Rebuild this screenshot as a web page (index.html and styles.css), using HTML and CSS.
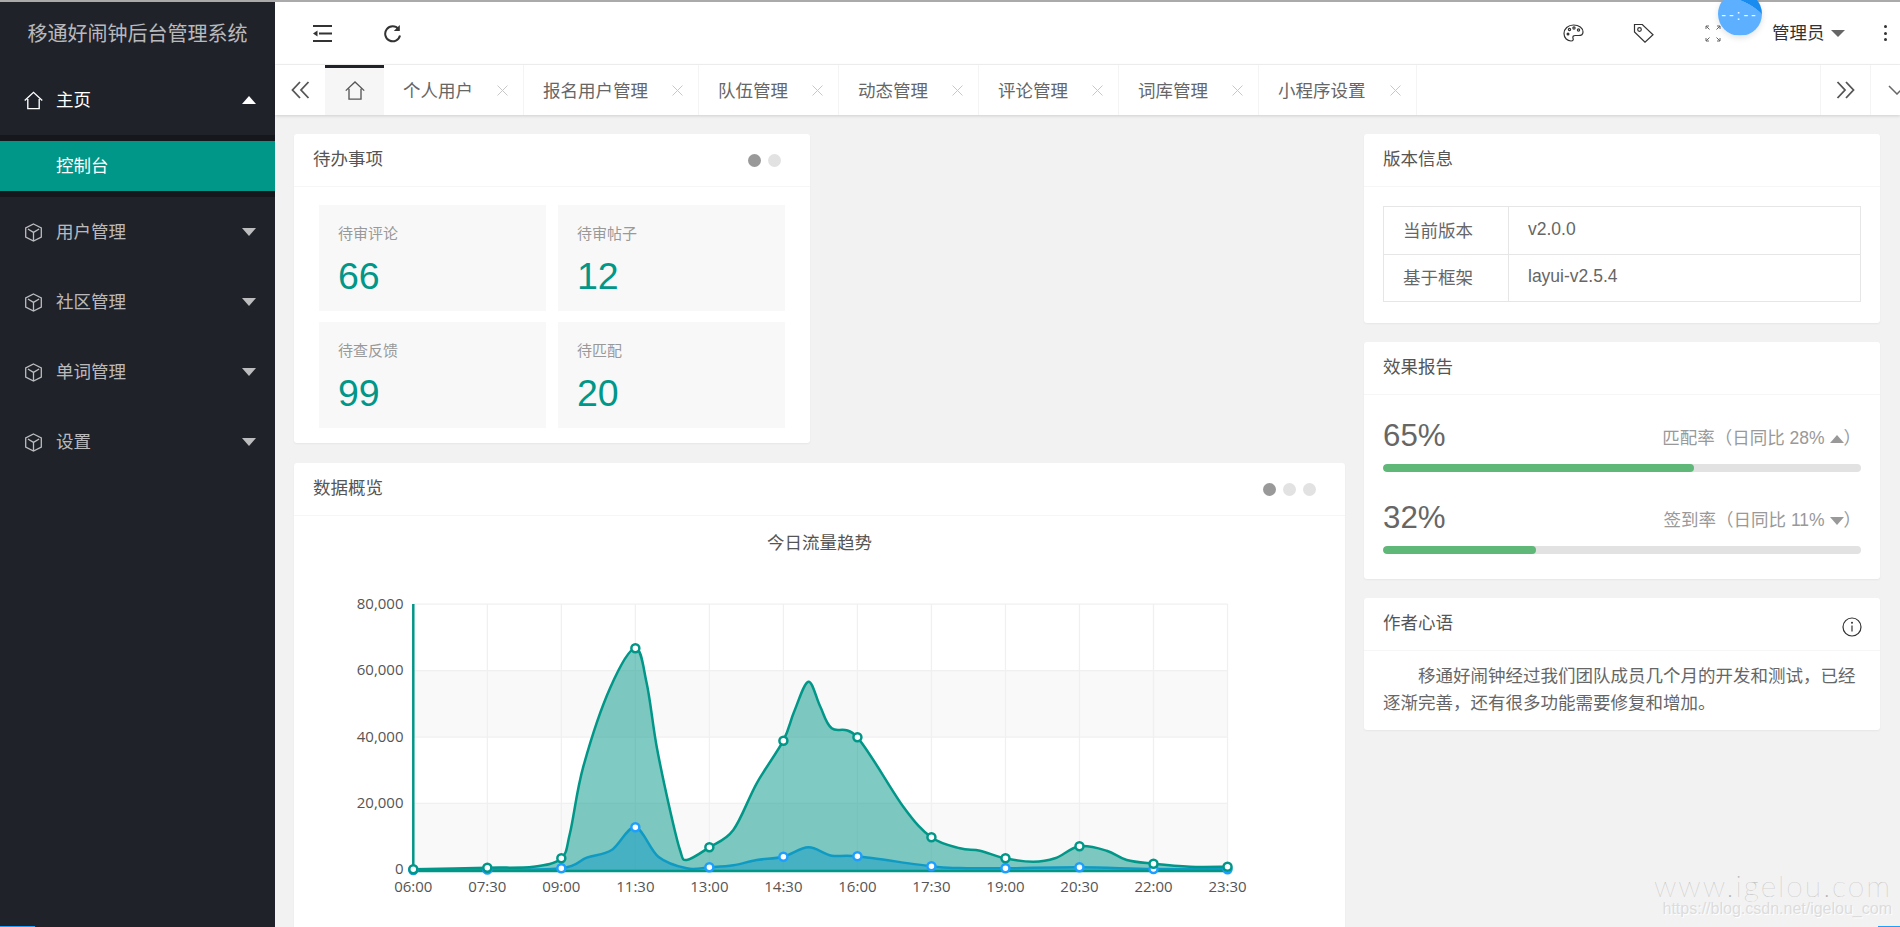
FILE: index.html
```html
<!DOCTYPE html>
<html lang="zh-CN">
<head>
  <meta charset="UTF-8">
  <meta name="viewport" content="width=device-width, initial-scale=1.0">
  <title>移通好闹钟后台管理系统</title>
  <link rel="stylesheet" href="styles.css">
</head>
<body>
  <svg class="icon-defs" aria-hidden="true">
    <symbol id="i-home" viewBox="0 0 18 17"><path d="M.7 8.6 9 .8l8.3 7.8M3.6 7v9.2h10.8V7"/></symbol>
    <symbol id="i-cube" viewBox="0 0 18 19"><path d="M9 1 16.8 5v9L9 18 1.2 14V5zM3.4 6 9 9.4 14.6 6M9 9.4v8"/></symbol>
    <symbol id="i-left" viewBox="0 0 19 18"><path d="M9 1 1.5 9 9 17M17.5 1 10 9l7.5 8"/></symbol>
    <symbol id="i-right" viewBox="0 0 19 18"><path d="M10 1l7.5 8-7.5 8M1.5 1 9 9l-7.5 8"/></symbol>
    <symbol id="i-close" viewBox="0 0 11 11"><path d="M.5.5l10 10M10.500.5l-10 10"/></symbol>
  </svg>

  <div class="top-line"></div>
  <div class="app">
    <aside class="sidebar">
      <div class="logo">移通好闹钟后台管理系统</div>
      <nav>
        <div class="nav-item open">
          <svg class="nav-icon"><use href="#i-home"/></svg>
          <span>主页</span>
          <i class="arrow-up"></i>
        </div>
        <div class="sub-nav">
          <div class="sub-item">控制台</div>
        </div>
        <div class="nav-item">
          <svg class="nav-icon"><use href="#i-cube"/></svg>
          <span>用户管理</span>
          <i class="arrow-down"></i>
        </div>
        <div class="nav-item">
          <svg class="nav-icon"><use href="#i-cube"/></svg>
          <span>社区管理</span>
          <i class="arrow-down"></i>
        </div>
        <div class="nav-item">
          <svg class="nav-icon"><use href="#i-cube"/></svg>
          <span>单词管理</span>
          <i class="arrow-down"></i>
        </div>
        <div class="nav-item">
          <svg class="nav-icon"><use href="#i-cube"/></svg>
          <span>设置</span>
          <i class="arrow-down"></i>
        </div>
      </nav>
    </aside>

    <div class="body">
      <header class="header">
        <div class="tool">
          <svg class="tool-icon" width="19" height="17" viewBox="0 0 19 17"><path d="M0 1h19M6 8.500h13M0 16h19"/><path class="solid" d="M0 8.500 4.500 5.500v6z"/></svg>
        </div>
        <div class="tool">
          <svg class="tool-icon" width="19" height="19" viewBox="0 0 19 19"><path d="M15.500 5A7.500 7.500 0 1 0 17 11.500"/><path class="solid" d="M16.800 1v6h-6z"/></svg>
        </div>
        <div class="header-right">
          <div class="tool">
            <svg class="tool-icon thin" width="21" height="18" viewBox="0 0 21 18"><path d="M10.500 1C5 1 1 4.800 1 9.500S4.500 17 8 17c2.500 0 2.500-1.500 2-2.800-.6-1.600.4-2.700 2.200-2.700h3.300c2.700 0 4.500-1.400 4.500-3.600C20 4 16 1 10.500 1z"/><circle class="solid" cx="5" cy="10" r="1.500"/><circle cx="6.500" cy="5.500" r="1.100"/><circle cx="11" cy="4" r="1.100"/><circle cx="15.500" cy="6" r="1.100"/></svg>
          </div>
          <div class="tool">
            <svg class="tool-icon thin" width="21" height="20" viewBox="0 0 21 20"><path d="M1.500 1.500h7.800L20 11.800 12 19.200 1.500 8.900z"/><circle cx="6.500" cy="6.500" r="1.800"/></svg>
          </div>
          <div class="tool">
            <svg class="tool-icon hair" width="16" height="17" viewBox="0 0 16 17"><path d="M4 1H1v3M1 1l3.500 3.500M12 1h3v3M15 1l-3.500 3.500M4 16H1v-3M1 16l3.500-3.500M12 16h3v-3M15 16l-3.500-3.500"/></svg>
          </div>
          <div class="admin"><span>管理员</span><i class="arrow-admin"></i></div>
          <div class="more"><i></i><i></i><i></i></div>
        </div>
        <div class="clock-ball">--:--</div>
      </header>

      <div class="tabs">
        <div class="tab-btn">
          <svg class="tab-arrow"><use href="#i-left"/></svg>
        </div>
        <div class="tab tab-home">
          <svg class="tab-home-icon"><use href="#i-home"/></svg>
        </div>
        <div class="tab"><span>个人用户</span><svg class="tab-close"><use href="#i-close"/></svg></div>
        <div class="tab"><span>报名用户管理</span><svg class="tab-close"><use href="#i-close"/></svg></div>
        <div class="tab"><span>队伍管理</span><svg class="tab-close"><use href="#i-close"/></svg></div>
        <div class="tab"><span>动态管理</span><svg class="tab-close"><use href="#i-close"/></svg></div>
        <div class="tab"><span>评论管理</span><svg class="tab-close"><use href="#i-close"/></svg></div>
        <div class="tab"><span>词库管理</span><svg class="tab-close"><use href="#i-close"/></svg></div>
        <div class="tab"><span>小程序设置</span><svg class="tab-close"><use href="#i-close"/></svg></div>
        <div class="tab-tools">
          <div class="tab-btn tab-btn-right">
            <svg class="tab-arrow"><use href="#i-right"/></svg>
          </div>
          <div class="tab-btn tab-btn-last">
            <svg class="tab-down" width="18" height="10" viewBox="0 0 18 10"><path d="M1 1l8 8 8-8"/></svg>
          </div>
        </div>
      </div>

      <main class="content">
        <div class="col-left">
          <section class="card card-todo">
            <div class="card-head">
              待办事项
              <div class="dots"><i class="on"></i><i></i></div>
            </div>
            <div class="todo-grid">
              <div class="tile"><p>待审评论</p><cite>66</cite></div>
              <div class="tile"><p>待审帖子</p><cite>12</cite></div>
              <div class="tile"><p>待查反馈</p><cite>99</cite></div>
              <div class="tile"><p>待匹配</p><cite>20</cite></div>
            </div>
          </section>

          <section class="card">
            <div class="card-head">
              数据概览
              <div class="dots"><i class="on"></i><i></i><i></i></div>
            </div>
            <svg id="chart" class="chart" viewBox="294 516 1051 420"></svg>
          </section>
        </div>

        <div class="col-right">
          <section class="card">
            <div class="card-head">版本信息</div>
            <div class="version-body">
              <table class="version-table">
                <tr><td class="version-key">当前版本</td><td>v2.0.0</td></tr>
                <tr><td class="version-key">基于框架</td><td>layui-v2.5.4</td></tr>
              </table>
            </div>
          </section>

          <section class="card">
            <div class="card-head">效果报告</div>
            <div class="report-body">
              <div class="report-row">
                <span class="report-num">65%</span>
                <span class="report-note">匹配率（日同比 28% <i class="tri-up"></i>）</span>
              </div>
              <div class="progress"><div class="progress-bar" style="width: 65%"></div></div>
              <div class="report-row report-second">
                <span class="report-num">32%</span>
                <span class="report-note">签到率（日同比 11% <i class="tri-down"></i>）</span>
              </div>
              <div class="progress"><div class="progress-bar" style="width: 32%"></div></div>
            </div>
          </section>

          <section class="card">
            <div class="card-head">
              作者心语
              <svg class="info-icon" width="20" height="20" viewBox="0 0 20 20"><circle cx="10" cy="10" r="9"/><path d="M10 8.500v6"/><circle class="solid" cx="10" cy="5.800" r="1"/></svg>
            </div>
            <p class="author-text">移通好闹钟经过我们团队成员几个月的开发和测试，已经逐渐完善，还有很多功能需要修复和增加。</p>
          </section>
        </div>
      </main>
    </div>
  </div>

  <div class="watermark">
    <div class="watermark-site">www.igelou.com</div>
    <div class="watermark-url">https://blog.csdn.net/igelou_com</div>
  </div>
  <div class="edge-left"></div>
  <div class="edge-right"></div>

  <script src="chart.js"></script>
</body>
</html>
```

FILE: styles.css
```css
* {
  box-sizing: border-box;
}
html, body {
  height: 100%;
}
body {
  margin: 0;
  overflow: hidden;
  background: #f2f2f2;
  color: #666;
  font-family: "Liberation Sans", "Noto Sans CJK SC", sans-serif;
  font-size: 17.5px;
}
p {
  margin: 0;
}
i, cite {
  font-style: normal;
}
.icon-defs {
  position: absolute;
  width: 0;
  height: 0;
}
.top-line {
  height: 2px;
  background: #aaa;
}
.app {
  display: flex;
  height: 925px;
}

/* sidebar */
.sidebar {
  flex: none;
  width: 275px;
  background: #20222a;
  color: rgba(255, 255, 255, 0.7);
}
.logo {
  height: 63px;
  line-height: 64px;
  text-align: center;
  font-size: 20px;
}
.nav-item {
  display: flex;
  align-items: center;
  height: 70px;
  padding: 0 19px 0 24px;
}
.nav-item span {
  padding-bottom: 4px;
}
.nav-item.open {
  color: #fff;
}
.nav-icon {
  flex: none;
  width: 19px;
  height: 19px;
  margin-right: 13px;
  fill: none;
  stroke: currentColor;
  stroke-width: 1.3;
}
.arrow-up, .arrow-down {
  margin-left: auto;
  border-left: 7.5px solid transparent;
  border-right: 7.5px solid transparent;
}
.arrow-up {
  border-bottom: 8px solid #fff;
}
.arrow-down {
  border-top: 8px solid rgba(255, 255, 255, 0.7);
}
.sub-nav {
  padding: 6px 0;
  background: #15171c;
}
.sub-item {
  height: 50px;
  line-height: 50px;
  padding-left: 56px;
  background: #009688;
  color: #fff;
}

/* header */
.body {
  flex: 1;
  min-width: 0;
}
.header {
  position: relative;
  display: flex;
  align-items: center;
  height: 63px;
  padding-left: 12px;
  background: #fff;
  border-bottom: 1px solid #f2f2f2;
}
.tool {
  display: flex;
  align-items: center;
  justify-content: center;
  width: 70px;
}
.tool-icon {
  fill: none;
  stroke: #333;
  stroke-width: 2;
}
.tool-icon.thin {
  stroke-width: 1.2;
}
.tool-icon.hair {
  stroke: #666;
  stroke-width: 1;
}
.tool-icon .solid {
  fill: #333;
  stroke: none;
}
.header-right {
  display: flex;
  align-items: center;
  margin-left: auto;
}
.admin {
  display: flex;
  align-items: center;
  width: 122px;
  padding-left: 24px;
  color: #333;
}
.admin span {
  padding-bottom: 4px;
}
.arrow-admin {
  margin-left: 6px;
  border-left: 7px solid transparent;
  border-right: 7px solid transparent;
  border-top: 7px solid #666;
}
.more {
  display: flex;
  flex-direction: column;
  align-items: center;
  gap: 3.5px;
  width: 30px;
}
.more i {
  width: 3px;
  height: 3px;
  background: #333;
  border-radius: 50%;
}
.clock-ball {
  position: absolute;
  top: -10px;
  right: 138px;
  width: 44px;
  height: 44px;
  line-height: 46px;
  text-align: center;
  white-space: nowrap;
  border-radius: 50%;
  color: #fff;
  font-size: 14px;
  letter-spacing: 3px;
  background:
    linear-gradient(transparent 43px, #bfe6e6 43px),
    radial-gradient(circle at 1px 65.5px, #5cb0ff 61px, #1a8cf0 61.5px);
  box-shadow: 0 2px 6px rgba(0, 0, 0, 0.12);
}

/* tabs */
.tabs {
  display: flex;
  height: 50px;
  background: #fff;
  box-shadow: 0 1px 3px rgba(0, 0, 0, 0.15);
  position: relative;
}
.tab-btn {
  flex: none;
  display: flex;
  align-items: center;
  justify-content: center;
  width: 50px;
}
.tab-arrow {
  width: 19px;
  height: 18px;
  fill: none;
  stroke: #555;
  stroke-width: 1.8;
}
.tab {
  flex: none;
  display: flex;
  align-items: center;
  padding: 0 15px 0 19px;
  color: #666;
  border-right: 1px solid #f4f4f4;
}
.tab span {
  padding-bottom: 2px;
}
.tab-close {
  width: 11px;
  height: 11px;
  margin-left: 24px;
  fill: none;
  stroke: #c8c8c8;
  stroke-width: 1;
}
.tab-home {
  width: 59px;
  padding: 0;
  justify-content: center;
  background: #f6f6f6;
  border-top: 3px solid #20222a;
  border-right: 0;
}
.tab-home-icon {
  width: 20px;
  height: 19px;
  margin-top: -3px;
  fill: none;
  stroke: #555;
  stroke-width: 1.2;
}
.tab-tools {
  display: flex;
  margin-left: auto;
}
.tab-btn-right {
  border-left: 1px solid #f4f4f4;
}
.tab-btn-last {
  width: 30px;
  justify-content: flex-start;
  padding-left: 17px;
  overflow: hidden;
  border-left: 1px solid #f4f4f4;
}
.tab-down {
  flex: none;
  fill: none;
  stroke: #666;
  stroke-width: 1.5;
}

/* content */
.content {
  display: flex;
  gap: 19px;
  height: 812px;
  padding: 19px 20px 0 19px;
  overflow: hidden;
}
.col-left {
  flex: none;
  display: flex;
  flex-direction: column;
  gap: 20px;
  width: 1051px;
}
.col-right {
  flex: none;
  display: flex;
  flex-direction: column;
  gap: 19px;
  width: 516px;
}
.card {
  flex: none;
  background: #fff;
  border-radius: 3px;
  box-shadow: 0 1px 2px rgba(0, 0, 0, 0.05);
}
.card-todo {
  width: 516px;
}
.card-head {
  display: flex;
  align-items: center;
  justify-content: space-between;
  height: 53px;
  padding: 0 19px 5px;
  border-bottom: 1px solid #f6f6f6;
  color: #555;
}
.dots {
  display: flex;
  gap: 7px;
  margin: 5px 10px 0 0;
}
.dots i {
  width: 13px;
  height: 13px;
  border-radius: 50%;
  background: #e2e2e2;
}
.dots i.on {
  background: #999;
}
.todo-grid {
  display: grid;
  grid-template-columns: 227px 227px;
  gap: 11px 12px;
  padding: 18px 25px 15px;
}
.tile {
  height: 106px;
  padding: 20px 19px 0;
  background: #f8f8f8;
}
.tile p {
  line-height: 18px;
  font-size: 15px;
  color: #999;
}
.tile cite {
  display: block;
  margin-top: 11px;
  line-height: 44px;
  font-size: 37.5px;
  color: #009688;
}
.chart {
  display: block;
  width: 1051px;
  height: 420px;
}
.chart text {
  font-family: "Open Sans", "Noto Sans CJK SC", sans-serif;
  font-size: 15px;
  fill: #555;
}
.chart .chart-title {
  font-family: "Liberation Sans", "Noto Sans CJK SC", sans-serif;
  font-size: 17.5px;
  fill: #555;
}
.chart .band {
  fill: #f9f9f9;
}
.chart .grid {
  stroke: #f0f0f0;
  stroke-width: 1.25;
}
.chart .axis {
  stroke: #009688;
  stroke-width: 2.5;
}
.chart .area-teal {
  fill: rgba(0, 150, 136, 0.5);
}
.chart .line-teal {
  fill: none;
  stroke: #009688;
  stroke-width: 2.5;
}
.chart .area-blue {
  fill: rgba(30, 159, 255, 0.5);
}
.chart .line-blue {
  fill: none;
  stroke: #1e9fff;
  stroke-width: 2.5;
}
.chart .dot-teal {
  fill: #fff;
  stroke: #009688;
  stroke-width: 2.5;
}
.chart .dot-blue {
  fill: #fff;
  stroke: #1e9fff;
  stroke-width: 2.5;
}
.version-body {
  padding: 19px 19px 21px;
}
.version-table {
  width: 100%;
  border-collapse: collapse;
}
.version-table td {
  height: 47.5px;
  padding: 0 19px 2px;
  border: 1.25px solid #e6e6e6;
}
.version-key {
  width: 125px;
}
.report-body {
  padding: 22px 19px 25px;
}
.report-row {
  display: flex;
  align-items: center;
  justify-content: space-between;
  height: 38px;
  margin-bottom: 9px;
}
.report-second {
  margin-top: 27px;
}
.report-num {
  font-size: 31.25px;
}
.report-note {
  color: #999;
}
.tri-up, .tri-down {
  display: inline-block;
  vertical-align: middle;
  border-left: 7.5px solid transparent;
  border-right: 7.5px solid transparent;
}
.tri-up {
  border-bottom: 8px solid #999;
}
.tri-down {
  border-top: 8px solid #999;
}
.progress {
  height: 8px;
  background: #e2e2e2;
  border-radius: 8px;
  overflow: hidden;
}
.progress-bar {
  height: 100%;
  background: #5fb878;
  border-radius: 8px;
}
.info-icon {
  margin: 11px -1px 0 0;
  fill: none;
  stroke: #333;
  stroke-width: 1.2;
}
.info-icon .solid {
  fill: #333;
  stroke: none;
}
.author-text {
  padding: 12px 19px 13px;
  line-height: 27px;
  text-indent: 35px;
}

/* overlays at the window edge */
.watermark {
  position: absolute;
  right: 8px;
  bottom: 8px;
  text-align: right;
  pointer-events: none;
}
.watermark-site {
  margin-bottom: -3px;
  font-family: "Lato", sans-serif;
  font-weight: 100;
  font-size: 30px;
  line-height: 34px;
  letter-spacing: 2px;
  color: #b5b5b5;
}
.watermark-url {
  line-height: 20px;
  font-size: 16px;
  color: #dcdcdc;
  text-shadow: 1px 1px 1px #fff;
}
.edge-left, .edge-right {
  position: absolute;
  bottom: 0;
  height: 1px;
  background: #1e9fff;
}
.edge-left {
  left: 0;
  width: 35px;
}
.edge-right {
  right: 0;
  width: 22px;
}
```

FILE: chart.js
```js
const svg = document.getElementById("chart");
const NS = "http://www.w3.org/2000/svg";

const LEFT = 413.3;
const RIGHT = 1227.5;
const STEP = 74.02;
const BASE = 870.5;
const GRID_Y = [604, 670.5, 737, 803.3, 869.7];
const Y_LABELS = ["80,000", "60,000", "40,000", "20,000", "0"];
const X_LABELS = ["06:00", "07:30", "09:00", "11:30", "13:00", "14:30", "16:00", "17:30", "19:00", "20:30", "22:00", "23:30"];

// traced points of each series, in page pixels
const teal = [[413.3, 869.3], [487.3, 867.7], [533.3, 866.7], [561.3, 858.3], [570, 833], [583.3, 766.7], [610, 688.3], [635.3, 648.3], [646.7, 683.3], [656.7, 746.7], [670, 810], [680, 850], [686.7, 860], [709.3, 847.3], [733.3, 830], [756.7, 783.3], [783.3, 740.7], [794, 712], [808.3, 681.7], [820, 706], [831.7, 728.3], [857.3, 737.3], [903.3, 806.7], [931.3, 837.3], [960, 848.3], [980, 850.7], [1005.3, 858.3], [1033.3, 861.7], [1055, 858.3], [1079.3, 846.3], [1106.7, 850.7], [1126.7, 860], [1153.3, 863.7], [1190, 866.7], [1227.3, 866.7]];
const blue = [[413.3, 870], [487.3, 869.5], [561.7, 868.3], [586.7, 857.7], [611.7, 850], [635.3, 827.3], [658.3, 856.7], [686.7, 868.3], [709.3, 867.3], [733.3, 865.3], [756.7, 860], [783.3, 856.7], [808.3, 847.3], [831.7, 855.7], [857.3, 856.3], [931.3, 866.3], [960, 868], [1005.3, 868.3], [1079.3, 867.3], [1153.3, 869], [1227.3, 869.3]];

const tealDots = [869.3, 867.7, 858.3, 648.3, 847.3, 740.7, 737.3, 837.3, 858.3, 846.3, 863.7, 866.7];
const blueDots = [870, 869.5, 868.3, 827.3, 867.3, 856.7, 856.3, 866.3, 868.3, 867.3, 869, 869.3];

function add(tag, attrs, text) {
  const el = document.createElementNS(NS, tag);
  for (const key in attrs) {
    el.setAttribute(key, attrs[key]);
  }
  if (text) {
    el.textContent = text;
  }
  svg.appendChild(el);
  return el;
}

// Catmull-Rom through the points, as cubic segments
function smooth(points) {
  let d = `M${points[0][0]} ${points[0][1]}`;
  for (let i = 0; i < points.length - 1; i++) {
    const p0 = points[i - 1] || points[i];
    const p1 = points[i];
    const p2 = points[i + 1];
    const p3 = points[i + 2] || p2;
    const c1x = p1[0] + (p2[0] - p0[0]) / 6;
    const c1y = p1[1] + (p2[1] - p0[1]) / 6;
    const c2x = p2[0] - (p3[0] - p1[0]) / 6;
    const c2y = p2[1] - (p3[1] - p1[1]) / 6;
    d += `C${c1x.toFixed(1)} ${c1y.toFixed(1)} ${c2x.toFixed(1)} ${c2y.toFixed(1)} ${p2[0]} ${p2[1]}`;
  }
  return d;
}

function drawSeries(points, name) {
  const line = smooth(points);
  const last = points[points.length - 1];
  add("path", { class: `area-${name}`, d: `${line}L${last[0]} ${BASE}L${points[0][0]} ${BASE}Z` });
  add("path", { class: `line-${name}`, d: line });
}

add("text", { class: "chart-title", x: 819.5, y: 543, "text-anchor": "middle", "dominant-baseline": "central" }, "今日流量趋势");

add("rect", { class: "band", x: LEFT, y: GRID_Y[1], width: RIGHT - LEFT, height: GRID_Y[2] - GRID_Y[1] });
add("rect", { class: "band", x: LEFT, y: GRID_Y[3], width: RIGHT - LEFT, height: GRID_Y[4] - GRID_Y[3] });

GRID_Y.forEach((y, i) => {
  add("line", { class: "grid", x1: LEFT, x2: RIGHT, y1: y, y2: y });
  add("text", { x: 403.5, y: y - 1.5, "text-anchor": "end", "dominant-baseline": "central" }, Y_LABELS[i]);
});

X_LABELS.forEach((label, i) => {
  const x = LEFT + STEP * i;
  add("line", { class: "grid", x1: x, x2: x, y1: GRID_Y[0], y2: BASE });
  add("text", { x: x, y: 885.7, "text-anchor": "middle", "dominant-baseline": "central" }, label);
});

drawSeries(blue, "blue");
drawSeries(teal, "teal");

add("line", { class: "axis", x1: LEFT, x2: LEFT, y1: GRID_Y[0], y2: 871.7 });
add("line", { class: "axis", x1: LEFT, x2: RIGHT, y1: 871, y2: 871 });

blueDots.forEach((y, i) => add("circle", { class: "dot-blue", cx: LEFT + STEP * i, cy: y, r: 4 }));
tealDots.forEach((y, i) => add("circle", { class: "dot-teal", cx: LEFT + STEP * i, cy: y, r: 4 }));
```
